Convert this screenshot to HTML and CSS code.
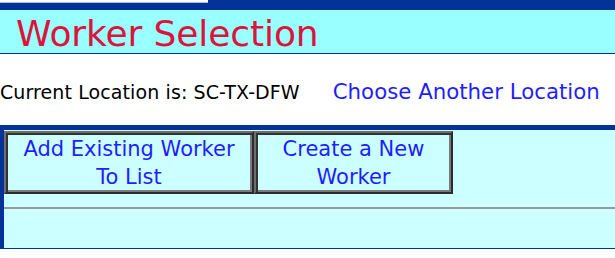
FILE: index.html
```html
<!DOCTYPE html>
<html>
<head>
    <meta charset="utf-8">
    <meta name="viewport" content="width=device-width, initial-scale=1.0">
    <title>Worker Selection</title>
    <link rel="stylesheet" href="styles.css">
</head>
<body>
    <div class="topbar"><div class="tab"></div></div>
    <div class="header">
        <h1 class="title">Worker Selection</h1>
    </div>
    <div class="location">
        <span class="current">Current Location is: SC-TX-DFW</span>
        <a class="change" href="#">Choose Another Location</a>
    </div>
    <div class="panel">
        <div class="actions">
            <button class="action action-add">Add Existing Worker<br>To List</button>
            <button class="action action-new">Create a New<br>Worker</button>
        </div>
        <hr class="divider">
        <div class="list"></div>
    </div>
</body>
</html>
```

FILE: styles.css
```css
body {
    margin: 0;
    font-family: "DejaVu Sans", Verdana, sans-serif;
    background-color: white;
}
.topbar {
    height: 10px;
    background-color: #033399;
}
.tab {
    width: 208px;
    height: 2px;
    background-color: white;
    border-bottom: 1px solid #b8bedc;
}
.header {
    box-sizing: border-box;
    height: 44px;
    padding: 4px 0 0 16px;
    background-color: #99ffff;
    border-bottom: 1px solid #033399;
}
.title {
    margin: 0;
    font-size: 36px;
    font-weight: normal;
    letter-spacing: -0.1px;
    line-height: 39px;
    color: #dc143c;
}
.location {
    box-sizing: border-box;
    height: 71px;
    padding-top: 25px;
    display: flex;
    align-items: baseline;
    gap: 33px;
}
.current {
    font-size: 19px;
    letter-spacing: 0.1px;
    color: black;
}
.change {
    font-size: 21.3px;
    color: #1e1eff;
    text-decoration: none;
}
.panel {
    border-top: 5px solid #033399;
    border-left: 4px solid #033399;
    border-bottom: 1px solid #033399;
    background-color: #ccffff;
    padding-top: 1px;
}
.actions {
    display: flex;
}
.action {
    box-sizing: border-box;
    height: 63px;
    padding: 0;
    font-family: inherit;
    font-size: 21px;
    line-height: 28px;
    color: #1e1eff;
    background-color: #ccffff;
    border: 2px solid;
    border-color: #6e6e6e #2b2b2b #2b2b2b #6e6e6e;
    box-shadow: inset 2px 2px 0 #333333, inset -2px -2px 0 #7a7a7a;
    text-align: center;
}
.action-add {
    width: 250px;
}
.action-new {
    width: 199px;
}
.divider {
    margin: 13px 0 0 0;
    height: 0;
    border: none;
    border-top: 2px solid #999999;
}
.list {
    height: 39px;
}
```
